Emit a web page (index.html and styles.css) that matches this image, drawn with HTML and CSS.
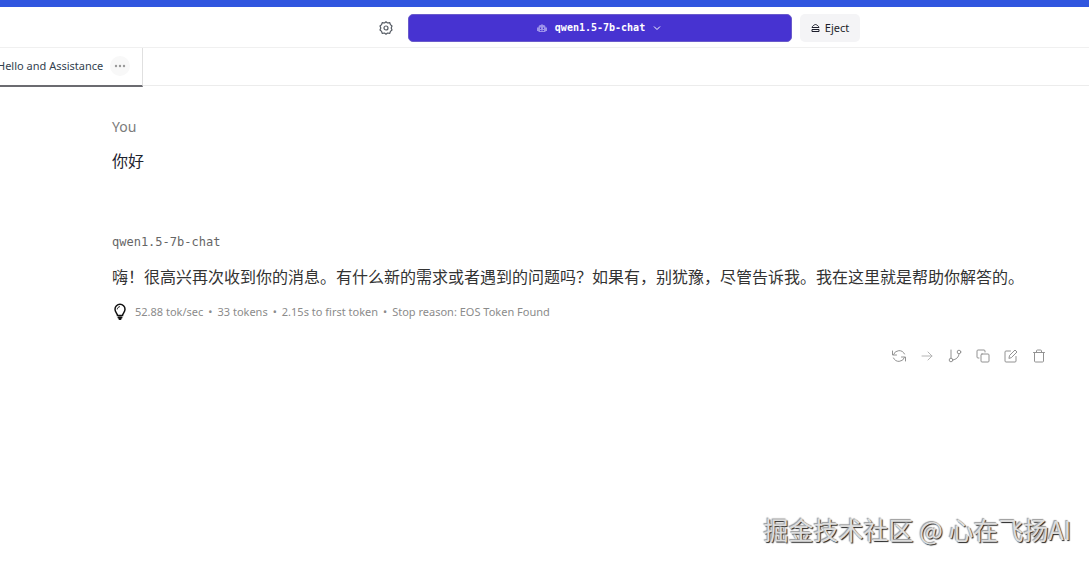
FILE: index.html
```html
<!DOCTYPE html>
<html lang="zh-CN">
<head>
<meta charset="utf-8">
<title>Hello and Assistance</title>
<link rel="stylesheet" href="styles.css">
</head>
<body>
<header class="topbar">
  <button class="icon-button settings" aria-label="Settings">
    <svg width="14" height="14" viewBox="0 0 14 14" fill="none" stroke="currentColor" stroke-width="1.200" stroke-linejoin="round"><path d="M5.500 2 7 .8 8.500 2l2.300-.4.600 2L13 5l-.8 2 .8 2-1.600 1.400-.6 2L8.500 12 7 13.200 5.500 12l-2.300.4-.6-2L1 9l.8-2L1 5l1.600-1.400.6-2z"/><circle cx="7" cy="7" r="2"/></svg>
  </button>
  <button class="model">
    <svg class="model-icon" width="10" height="10" viewBox="0 0 20 20" fill="currentColor"><path d="M9 2h2v2h2a4 4 0 0 1 4 4v1h3v7h-3v1a1 1 0 0 1-1 1H4a1 1 0 0 1-1-1v-1H0V9h3V8a4 4 0 0 1 4-4h2z"/><path d="M6 9h2v3H6zM12 9h2v3h-2zM6 14h2v2H6zM9 14h2v2H9zM12 14h2v2h-2z" fill="#4733d1"/></svg>
    <span>qwen1.5-7b-chat</span>
    <svg width="8" height="8" viewBox="0 0 8 8" fill="none" stroke="currentColor"><path d="m1 2.500 3 3 3-3"/></svg>
  </button>
  <button class="eject">
    <svg width="9" height="9" viewBox="0 0 9 9" fill="none" stroke="currentColor" stroke-linejoin="round"><path d="M1 4.500c0-1 2.300-3 3.500-3S8 3.500 8 4.500zM1 6.500h7v2H1z"/></svg>
    <span>Eject</span>
  </button>
</header>
<nav class="tabs">
  <div class="tab">
    <a class="tab-link" href="#chat">Hello and Assistance</a>
    <button class="more" aria-label="More">
      <svg width="12" height="4" viewBox="0 0 12 4" fill="currentColor"><circle cx="2" cy="2" r="1.200"/><circle cx="6" cy="2" r="1.200"/><circle cx="10" cy="2" r="1.200"/></svg>
    </button>
  </div>
</nav>
<main class="chat" id="chat">
  <article class="message">
    <h2 class="author">You</h2>
    <p class="text user-text">你好</p>
  </article>
  <article class="message">
    <h2 class="author author-model">qwen1.5-7b-chat</h2>
    <p class="text">嗨！很高兴再次收到你的消息。有什么新的需求或者遇到的问题吗？如果有，别犹豫，尽管告诉我。我在这里就是帮助你解答的。</p>
    <div class="stats">
      <svg width="16" height="18" viewBox="0 0 16 18" fill="none" stroke="currentColor" stroke-width="1.500" stroke-linecap="round"><path d="M5.500 12.500c0-2-2.500-3.200-2.500-6.200a5 5 0 0 1 10 0c0 3-2.500 4.200-2.500 6.200z"/><path d="M5.300 6c.2-1.300 1-2 2.200-2.300" stroke-width="1"/><path d="M6.500 14.500h3M7.500 16h1" stroke-width="2"/></svg>
      <p class="stat-list"><span>52.88 tok/sec</span><span>•</span><span>33 tokens</span><span>•</span><span>2.15s to first token</span><span>•</span><span>Stop reason: EOS Token Found</span></p>
    </div>
    <div class="actions">
      <button class="icon-button" aria-label="Regenerate"><svg width="16" height="14" viewBox="0 0 16 14"><path d="M2.500 5.500A6 6 0 0 1 13.500 5M13.500 8.500A6 6 0 0 1 2.500 9M1.500 2v4h4M14.500 12V8h-4"/></svg></button>
      <button class="icon-button pale" aria-label="Continue"><svg width="14" height="14" viewBox="0 0 14 14"><path d="M2 7h10M8 3l4 4-4 4"/></svg></button>
      <button class="icon-button" aria-label="Branch"><svg width="14" height="14" viewBox="0 0 14 14"><path d="M3 1v8M11 4.800C11 8 8 10.800 4.800 10.800"/><circle cx="3" cy="11" r="1.800"/><circle cx="11" cy="3" r="1.800"/></svg></button>
      <button class="icon-button" aria-label="Copy"><svg width="14" height="14" viewBox="0 0 14 14"><rect x="5" y="5" width="8" height="8" rx="1"/><path d="M3 9H2a1 1 0 0 1-1-1V2a1 1 0 0 1 1-1h6a1 1 0 0 1 1 1v1"/></svg></button>
      <button class="icon-button" aria-label="Edit"><svg width="14" height="14" viewBox="0 0 14 14"><path d="M6.500 2H2a1 1 0 0 0-1 1v9a1 1 0 0 0 1 1h9a1 1 0 0 0 1-1V7.500M5 9l.6-2.600L11 1l2 2-5.400 5.400z"/></svg></button>
      <button class="icon-button" aria-label="Delete"><svg width="14" height="14" viewBox="0 0 14 14"><path d="M1.500 3.500h11M2.500 3.500V12a1 1 0 0 0 1 1h7a1 1 0 0 0 1-1V3.500M4.500 3.500V2a1 1 0 0 1 1-1h3a1 1 0 0 1 1 1v1.500"/></svg></button>
    </div>
  </article>
</main>
<footer class="watermark">掘金技术社区 @ 心在飞扬AI</footer>
</body>
</html>
```
FILE: styles.css
```css
* { box-sizing: border-box; }
body {
  margin: 0;
  min-height: 100vh;
  display: flex;
  flex-direction: column;
  background: #fff;
  color: #1f2937;
  font-family: "Noto Sans", "Noto Sans CJK SC", sans-serif;
  font-size: 11px;
}
button {
  margin: 0;
  padding: 0;
  border: 0;
  background: none;
  font: inherit;
  color: inherit;
  display: flex;
  align-items: center;
  justify-content: center;
}
h2, p { margin: 0; font-weight: 400; }
.topbar {
  display: flex;
  align-items: center;
  justify-content: center;
  gap: 8px;
  height: 48px;
  padding-top: 1px;
  padding-left: 150px;
  border-top: 7px solid #3056df;
  border-bottom: 1px solid #f0f0f0;
}
.icon-button { width: 14px; height: 14px; flex: none; }
.settings { margin-right: 7px; color: #555b63; }
.model {
  width: 384px;
  height: 28px;
  gap: 8px;
  padding-right: 2px;
  border: 1px solid #6a5bcb;
  border-radius: 5px;
  background: #4733d1;
  color: #fff;
  font: bold 10px "DejaVu Sans Mono", monospace;
}
.model-icon { color: #9d92ea; }
.eject {
  width: 60px;
  height: 28px;
  gap: 5px;
  border-radius: 5px;
  background: #f4f4f6;
  color: #1c1e2b;
}
.tabs { display: flex; height: 38px; border-bottom: 1px solid #ececec; }
.tab {
  display: flex;
  align-items: center;
  gap: 7px;
  height: 39px;
  margin-left: -3px;
  padding-right: 12px;
  padding-bottom: 2px;
  border-right: 1px solid #e0e0e0;
  border-bottom: 2px solid #6b6b70;
}
.tab-link { color: #33424f; text-decoration: none; white-space: nowrap; }
.more { width: 20px; height: 20px; border-radius: 10px; background: #f8f8f8; color: #999; }
.chat { flex: 1; padding: 29px 43px 0 112px; }
.author { font-size: 14px; line-height: 24px; color: #7b7b7b; }
.author-model { font: 12px/24px "DejaVu Sans Mono", monospace; color: #666; }
.text { margin-top: 9px; font: 16px/26px "Noto Sans CJK SC", sans-serif; color: #333; }
.user-text { margin-top: 8px; margin-bottom: 57px; color: #1f2430; }
.stats { display: flex; align-items: center; gap: 7px; margin-top: 14px; line-height: 18px; color: #8b8b8b; }
.stats svg { flex: none; color: #111; }
.stat-list { display: flex; flex-wrap: wrap; gap: 0 5px; }
.actions { display: flex; justify-content: flex-end; gap: 14px; margin-top: 28px; color: #929292; }
.actions svg { flex: none; fill: none; stroke: currentColor; stroke-linecap: round; stroke-linejoin: round; }
.pale { color: #b5b5b5; }
.watermark {
  align-self: flex-end;
  padding: 0 18px 15px;
  font: 25px/36px "Noto Sans CJK SC", sans-serif;
  color: #ddd;
  text-shadow: -1px -1px 1px #999, 1px 1px 1px #222;
}
```
